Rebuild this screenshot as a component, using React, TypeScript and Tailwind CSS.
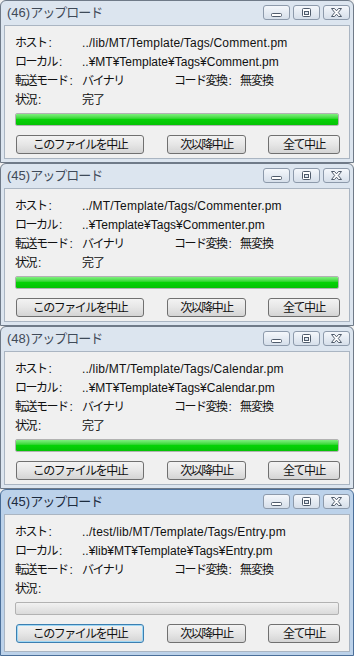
const font = { fontFamily: '"Liberation Sans", "Noto Sans CJK JP", sans-serif' };

type WinProps = {
  num: string;
  host: string;
  local: string;
  done: boolean;
  active?: boolean;
  tall?: boolean;
};

const CapButton = ({ kind }: { kind: "min" | "max" | "close" }) => {
  return (
    <div className="w-[27px] h-[15px] rounded-[3px] border border-[#8d9aab] bg-gradient-to-b from-[#f4f7fb] to-[#d6dfea] flex items-center justify-center">
      <svg width="17" height="11" viewBox="0 0 17 11">
        {kind === "min" && (
          <rect x="3.5" y="6.5" width="10" height="3" rx="1" fill="#fff" stroke="#4f5b6b" />
        )}
        {kind === "max" && (
          <g>
            <rect x="4.5" y="1.5" width="8" height="8" rx="1" fill="#fff" stroke="#4f5b6b" />
            <rect x="6.5" y="4.5" width="4" height="3" fill="#dfe6ee" stroke="#4f5b6b" />
          </g>
        )}
        {kind === "close" && (
          <path
            d="M3.5 1.5 H6.5 L8.5 3.8 L10.5 1.5 H13.5 L10.3 5.5 L13.5 9.5 H10.5 L8.5 7.2 L6.5 9.5 H3.5 L6.7 5.5 Z"
            fill="#fff"
            stroke="#4f5b6b"
            strokeLinejoin="round"
          />
        )}
      </svg>
    </div>
  );
};

const Btn = ({ label, w, focus }: { label: string; w: string; focus?: boolean }) => (
  <div
    className={`${w} h-[19px] rounded-[3px] border flex items-center justify-center text-[12px] tracking-[-1.5px] text-[#111] bg-gradient-to-b from-[#f3f3f3] via-[#e6e6e6] to-[#d4d4d4] ${
      focus ? "border-[#3c7fb1] shadow-[inset_0_0_0_1px_#9fd8f5]" : "border-[#707070]"
    }`}
  >
    {label}
  </div>
);

const Label = ({ text, w }: { text: string; w: string }) => (
  <span className={`${w} flex`}>
    <span className="tracking-[-1.5px]">{text}</span>
    <span className="ml-[2px]">:</span>
  </span>
);

const Window = ({ num, host, local, done, active, tall }: WinProps) => {
  return (
    <div
      className={`${tall ? "h-[167px]" : "h-[163px]"} flex flex-col rounded-t-[6px] border ${
        active ? "border-[#4b6f99] bg-[#bcd2ea]" : "border-[#6f7a88] bg-[#dce5ef]"
      }`}
      style={font}
    >
      <div className="h-[24px] flex items-center justify-between pl-[6px] pr-[3px]">
        <div className={`text-[13px] ${active ? "text-[#1c2b3e]" : "text-[#3f4a58]"}`}>
          (4{num})<span className="tracking-[-1px]">アップロード</span>
        </div>
        <div className="flex gap-[3px] -mt-[2px]">
          <CapButton kind="min" />
          <CapButton kind="max" />
          <CapButton kind="close" />
        </div>
      </div>
      <div className="flex-1 mx-[3px] mb-[3px] bg-[#f0f0f0] border border-[#aab5c2] pt-[7px] text-[12px] text-[#111]">
        <div className="pl-[10px] flex flex-col">
          <div className="flex h-[19px] items-center">
            <Label text="ホスト" w="w-[67px]" />
            <span className="tracking-[0.2px]">{host}</span>
          </div>
          <div className="flex h-[19px] items-center">
            <Label text="ローカル" w="w-[67px]" />
            <span>{local}</span>
          </div>
          <div className="flex h-[19px] items-center">
            <Label text="転送モード" w="w-[67px]" />
            <span className="w-[92px] tracking-[-1.5px]">バイナリ</span>
            <Label text="コード変換" w="w-[66px]" />
            <span className="tracking-[-1px]">無変換</span>
          </div>
          <div className="flex h-[19px] items-center">
            <Label text="状況" w="w-[67px]" />
            <span className="tracking-[-1px]">{done ? "完了" : ""}</span>
          </div>
        </div>
        <div className="ml-[10px] mt-[4px] w-[324px] h-[13px] rounded-[2px] border border-[#b2b2b2] bg-gradient-to-b from-[#f2f2f2] to-[#dadada] overflow-hidden">
          {done && (
            <div className="h-full w-full bg-gradient-to-b from-[#7ef07e] via-[#06d206] to-[#05c205]" />
          )}
        </div>
        <div className="flex mt-[9px] ml-[11px]">
          <Btn label="このファイルを中止" w="w-[128px]" focus={active} />
          <div className="ml-[23px]">
            <Btn label="次以降中止" w="w-[79px]" />
          </div>
          <div className="ml-[22px]">
            <Btn label="全て中止" w="w-[72px]" />
          </div>
        </div>
      </div>
    </div>
  );
};

export default function App() {
  return (
    <div className="w-[354px] h-[656px] overflow-hidden bg-[#f0f0f0] flex flex-col">
      <Window num="6" host="../lib/MT/Template/Tags/Comment.pm" local="..¥MT¥Template¥Tags¥Comment.pm" done />
      <Window num="5" host="../MT/Template/Tags/Commenter.pm" local="..¥Template¥Tags¥Commenter.pm" done />
      <Window num="8" host="../lib/MT/Template/Tags/Calendar.pm" local="..¥MT¥Template¥Tags¥Calendar.pm" done />
      <Window num="5" host="../test/lib/MT/Template/Tags/Entry.pm" local="..¥lib¥MT¥Template¥Tags¥Entry.pm" done={false} active tall />
    </div>
  );
}
